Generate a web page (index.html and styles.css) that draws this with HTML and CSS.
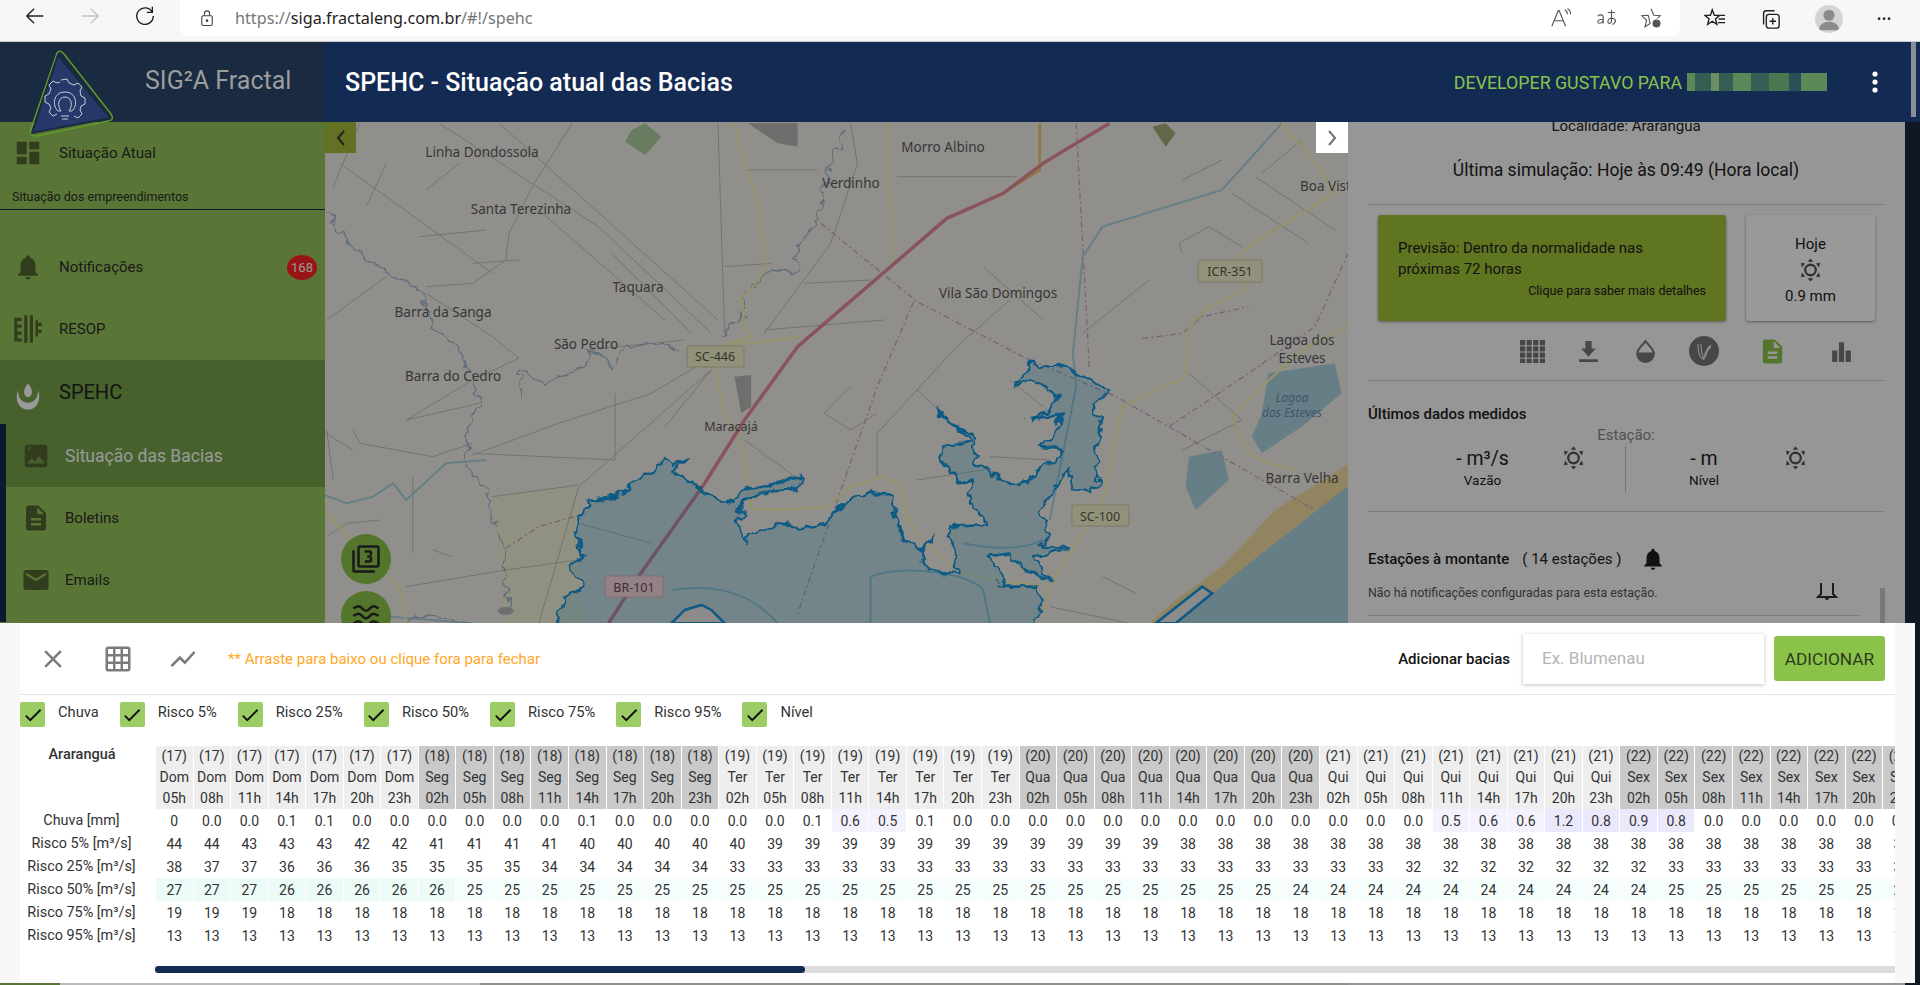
FILE: index.html
```html
<!DOCTYPE html>
<html lang="pt-BR">
<head>
<meta charset="UTF-8">
<title>SIG²A Fractal - SPEHC</title>
<link rel="stylesheet" href="styles.css">
</head>
<body>
    <svg class="defs" width="0" height="0">
        <symbol id="sun" viewBox="0 0 24 24">
            <circle cx="12" cy="12" r="5.500" fill="none" stroke="currentColor" stroke-width="2.400"/>
            <path fill="currentColor" d="M12 0l3 3.400H9zM12 24l-3-3.400h6zM2 4.500l4.400.6-3.300 4.200zM22 4.500l-1.100 4.800-3.300-4.200zM2 19.500l1.100-4.800 3.300 4.200zM22 19.500l-4.400-.6 3.300-4.200z"/>
        </symbol>
    </svg>

    <div class="browser-bar">
        <div class="nav-icons">
            <svg class="nav-icon" viewBox="0 0 24 24"><path d="M21 12H3M11 4l-8 8 8 8"/></svg>
            <svg class="nav-icon nav-off" viewBox="0 0 24 24"><path d="M3 12h18M13 4l8 8-8 8"/></svg>
            <svg class="nav-icon" viewBox="0 0 24 24"><path d="M20 8a9 9 0 1 0 1 4M20 2v6h-6"/></svg>
        </div>
        <div class="url-pill">
            <svg class="lock" viewBox="0 0 24 24"><rect x="5" y="9" width="14" height="13" rx="2"/><path d="M8.500 9V6a3.500 3.500 0 0 1 7 0v3"/><circle cx="12" cy="15.500" r="1"/></svg>
            <div class="url"><span class="url-dim">https://</span>siga.fractaleng.com.br<span class="url-dim">/#!/spehc</span></div>
            <div class="url-tools">
                <svg class="nav-icon thin" viewBox="0 0 24 24"><path d="M2 21L9 4h1l7 17M5 15h10M16 3c2 1 3 3 3 5M19 2c2 1 3.500 3.500 3.500 6"/></svg>
                <svg class="nav-icon thin" viewBox="0 0 24 24"><path d="M3 10c1-2 6-2 6 1v7M9 14c-3-1-6 0-6 2s4 3 6-1M14 6h8M18 3v12c0 3-4 4-4 1s4-5 7-3 0 6-2 6"/></svg>
                <svg class="nav-icon thin" viewBox="0 0 24 24"><path d="M12 2l3 7 7 .6-5.300 4.700 1 3.700M11 18l-5.500 3.500 1.700-7L2 9.600 9 9z"/><circle class="dot-fill" cx="18" cy="18" r="5"/></svg>
            </div>
        </div>
        <div class="browser-tools">
            <svg class="nav-icon" viewBox="0 0 24 24"><path d="M9 2l2.300 6H17l-4.500 4 1.500 6-5-3.500L4 18l1.500-6L1 8h6zM17 8h6M16 12h7M15 16h8"/></svg>
            <svg class="nav-icon" viewBox="0 0 24 24"><rect x="8" y="7" width="14" height="15" rx="3"/><path d="M15 11v7M11.500 14.500h7M5 18V6a3 3 0 0 1 3-3h9"/></svg>
            <div class="avatar"><svg viewBox="0 0 30 30"><circle cx="15" cy="11" r="6"/><path d="M4 27c1-7 6-9 11-9s10 2 11 9z"/></svg></div>
            <div class="browser-dots">•••</div>
        </div>
    </div>

    <div class="app">
        <div class="topbar">
            <div class="brand">SIG²A Fractal</div>
            <div class="title-bar">
                <div class="page-title">SPEHC - Situação atual das Bacias</div>
                <div class="user-name">DEVELOPER GUSTAVO PARA</div>
                <div class="blurred"></div>
                <svg class="more" viewBox="0 0 6 22"><circle cx="3" cy="3" r="2.600"/><circle cx="3" cy="11" r="2.600"/><circle cx="3" cy="19" r="2.600"/></svg>
            </div>
            <svg class="logo" viewBox="0 0 90 90">
                <path class="logo-outer" d="M32 4 Q35 0 39 5 L86 65 Q90 71 83 72 L12 87 Q4 88 6 80 Z"/>
                <path class="logo-inner" d="M33 6 L85 69 L7 84 Z"/>
                <path class="logo-gear" d="M36 31l6-1 2 4 5 2 4-2 4 4-2 4 1 5 4 2v6l-4 2-1 4 2 4-4 4-4-2M32 65l-4 2-4-4 2-4-2-4-4-2v-6l4-2 2-5-2-4 4-4 4 2 3-1"/>
                <path class="logo-gear" d="M33 62c-6-5-5-19 7-19s13 14 7 19l-3 0c4-5 3-14-4-14s-8 9-4 14zM36 67h8M37 70h6"/>
            </svg>
        </div>

        <div class="content">
            <div class="sidebar">
                <div class="side-head">
                    <div class="side-row">
                        <svg class="side-icon" viewBox="0 0 24 24"><path d="M3 13h8V3H3v10zm0 8h8v-6H3v6zm10 0h8V11h-8v10zm0-18v6h8V3h-8z"/></svg>
                        <span>Situação Atual</span>
                    </div>
                    <div class="side-note">Situação dos empreendimentos</div>
                </div>
                <div class="side-item">
                    <svg class="side-icon" viewBox="0 0 24 24"><path d="M12 22c1.100 0 2-.9 2-2h-4c0 1.100.89 2 2 2zm6-6v-5c0-3.070-1.640-5.640-4.500-6.320V4c0-.83-.67-1.500-1.500-1.500s-1.500.67-1.500 1.500v.68C7.630 5.360 6 7.920 6 11v5l-2 2v1h16v-1l-2-2z"/></svg>
                    <span>Notificações</span>
                    <span class="badge">168</span>
                </div>
                <div class="side-item">
                    <svg class="side-icon" viewBox="0 0 24 24"><path d="M1 3h6v2.500H3.500v3H7V11H3.500v3H7v2.500H3.500v3H7V22H1zM9 1h2.500v22H9zM13.500 1H16v22h-2.500zM18 5h2v2h3v2.500h-3v3h3V15h-3v3h-2z"/></svg>
                    <span>RESOP</span>
                </div>
                <div class="side-item side-open">
                    <svg class="side-icon side-drop" viewBox="0 0 24 24"><path d="M12 1c3 4 4 7 2.500 9.500-1.500 2-3.500 2-5 0C8 8 9 5 12 1zM4 6.500c-3 8 1 15.500 8 15.500s11-7.500 8-15.500c0 6-3 10-8 10s-8-4-8-10z"/></svg>
                    <span>SPEHC</span>
                </div>
                <div class="sub-menu">
                    <div class="sub-item sub-active">
                        <svg class="side-icon" viewBox="0 0 24 24"><path d="M21 19V5c0-1.100-.9-2-2-2H5c-1.100 0-2 .9-2 2v14c0 1.100.9 2 2 2h14c1.100 0 2-.9 2-2zM8.500 13.500l2.500 3.010L14.500 12l4.500 6H5l3.500-4.500zM6 5h2l-2 3z"/></svg>
                        <span>Situação das Bacias</span>
                    </div>
                    <div class="sub-item">
                        <svg class="side-icon" viewBox="0 0 24 24"><path d="M14 2H6c-1.100 0-1.990.9-1.990 2L4 20c0 1.100.89 2 1.990 2H18c1.100 0 2-.9 2-2V8l-6-6zm2 16H8v-2h8v2zm0-4H8v-2h8v2zm-3-5V3.500L18.500 9H13z"/></svg>
                        <span>Boletins</span>
                    </div>
                    <div class="sub-item">
                        <svg class="side-icon" viewBox="0 0 24 24"><path d="M20 4H4c-1.100 0-1.990.9-1.990 2L2 18c0 1.100.9 2 2 2h16c1.100 0 2-.9 2-2V6c0-1.100-.9-2-2-2zm0 4l-8 5-8-5V6l8 5 8-5v2z"/></svg>
                        <span>Emails</span>
                    </div>
                </div>
            </div>

            <div class="map">
                <svg class="map-svg" viewBox="0 0 1023 501">
                    <defs>
                        <filter id="jag" x="-5%" y="-5%" width="110%" height="110%">
                            <feTurbulence type="fractalNoise" baseFrequency=".06 .03" numOctaves="2" seed="4"/>
                            <feDisplacementMap in="SourceGraphic" scale="26" xChannelSelector="R" yChannelSelector="G"/>
                        </filter>
                    </defs>
                    <g transform="translate(-5 -2) scale(.6633 .3333)">
                        <path class="m-forest" d="M470 30L490 10 515 50 490 105 460 65z"/>
                        <path class="m-grey" d="M645 10H720V80L690 70z M625 770L650 765 650 860 635 880z"/>
                        <path class="m-olive" d="M1255 20L1275 10 1290 40 1275 80z"/>
                        <path class="m-meadow" d="M260 1130L390 1095 395 1510H280z"/>
                        <path class="m-water" d="M1568 1050L1420 1300 1250 1510H1568z M1430 760L1530 730 1540 820 1480 920 1420 1000 1405 950 1420 880z M1310 1010L1360 990 1370 1080 1320 1170 1305 1100z"/>
                        <path class="m-sand" d="M1568 1010L1440 1170 1360 1340 1290 1440 1250 1510 1290 1510 1420 1300 1568 1070z"/>
                        <path class="m-minor" d="M180 10L420 320 590 640M270 10L600 600M380 10L320 200 285 340 280 420 230 490 160 500M30 130L260 460M100 130L70 260M210 130L160 210M100 470L10 600M160 520L260 650 300 715M300 715L230 780 130 900M240 850L130 900M50 930L60 970 170 1010 230 970M400 690L550 660M600 700L500 820 360 910 230 1005M0 930L50 990M590 750L390 1100 330 1510M260 1130L390 1095 M670 640L770 370 810 130 800 10M640 150H750M870 170H1050M730 490L830 480M670 630L850 600M960 680L840 940 840 1070M1040 540L960 680M1300 400L1295 370 1340 320 1390 380M1310 760L1390 900 1300 990M610 440L680 430M600 10L610 640M520 920L590 750M800 800L760 880 800 930 840 880M130 1400L280 1350 390 1320M1090 600L1000 440M1410 170L1530 330M1375 220L1490 370M1220 1510L1100 1460M20 1080L10 930M140 1070V1300M445 820V1020 L230 1000M60 10L20 200M440 400L560 640M330 270L520 600M150 350L250 330M230 430L300 420M730 1090L640 960M900 810L950 900M1040 780L1090 860M1010 1010L1100 1020M900 1080L1000 1050M1300 180L1360 120M1480 60L1420 160M1180 1370L1230 1420M1150 640L1250 480M10 1250L40 1210 90 1200M170 1290L200 1310M500 1270L390 1210"/>
                        <path class="m-boundary" d="M755 310L900 545 1060 710 1200 830 1500 1170M895 545L840 800 720 1480M1140 10L1160 750M1280 920L1400 760 1500 620 1550 400M280 1285L330 1220 400 1180M1240 655L1300 640 1330 590 1400 560"/>
                        <path class="m-river" d="M1450 10L1360 210 1180 320 1150 410 1135 700 1140 800 1120 1000 1100 1200M0 1120L40 1150 80 1130 110 1090 130 1140 190 1030 250 1020M230 1510L40 1480 M530 1410C600 1390 650 1420 690 1510M830 1510V1370C880 1330 980 1360 1000 1410L1010 1510M970 1270C1020 1290 1060 1290 1090 1260"/>
                        <path class="m-stream" filter="url(#jag)" d="M10 280C40 330 30 370 60 400 90 440 110 470 130 490 160 500 150 530 170 600 170 670 210 640 215 720 240 830 250 850 225 900 220 1000 210 1050 250 1100 270 1200 280 1400 285 1470M305 830L300 750 340 790 400 740 410 690 440 740 460 680 520 670 540 700M600 650L640 590 640 520 680 450 720 460 720 380 750 300 760 220 770 130 790 30M230 1510C180 1500 160 1460 130 1510"/>
                        <path class="m-major" d="M625 10L640 130 660 250 672 440 650 510 635 530 640 620 650 650 610 672M855 10L860 250 865 430M610 672L650 670 725 650M595 740L610 880 640 990 645 1110 650 1165 700 1170 765 1160 800 1100 845 1070 875 1090 885 1190 905 1250 960 1355 1030 1385 1090 1395M1450 10L1510 150 1530 220 1470 290 1400 380 1380 420 1395 510 1340 560 1310 620 1305 770 1210 860 1195 1000 1180 1150 1130 1300 1100 1400 1090 1480M1550 620L1480 690 1420 800 1375 890 1400 1000 1430 1030 1470 1050M0 1160L60 1290 120 1400 130 1510"/>
                        <path class="m-orange" d="M1085 10V150L1030 220"/>
                        <path class="m-highway" d="M1190 10L1090 130 1030 220 945 295 720 680 640 900 580 1090 480 1370 435 1510"/>
                        <path class="m-basin" filter="url(#jag)" d="M350 1640L365 1440 395 1400 375 1340 395 1300 385 1230 405 1140 450 1130 470 1090 510 1050 520 1010 530 1035 555 1015 530 1055 570 1100 600 1140 625 1145 635 1110 670 1100 700 1085 725 1065 720 1105 680 1115 640 1140 630 1170 640 1180 630 1200 640 1265 665 1230 700 1210 725 1225 760 1215 790 1150 830 1115 860 1130 870 1190 880 1260 905 1290 925 1245 905 1300 915 1350 960 1360 950 1220 1010 1215 980 1150 985 1080 970 1090 935 1020 945 980 985 960 935 890 930 865 945 905 990 950 985 1030 1010 1050 1025 1080 1060 1095 1080 1060 1125 990 1085 980 1100 960 1120 880 1070 900 1100 870 1115 830 1075 780 1045 800 1065 750 1070 720 1085 750 1115 735 1190 815 1165 860 1180 910 1170 1000 1175 1060 1165 1120 1135 1110 1130 1040 1090 1160 1095 1260 1085 1280 1125 1285 1080 1310 1100 1380 1060 1350 1040 1300 1010 1310 1030 1380 1030 1400 1080 1400 1090 1440 1040 1640z"/>
                        <path class="m-cut" d="M530 1510L550 1470 575 1455 590 1470 610 1510zM1260 1510L1330 1400 1345 1420 1290 1510z"/>
                        <circle class="m-pin" cx="280" cy="1473" r="12"/>
                    </g>
                    <text class="m-label" x="157" y="35">Linha Dondossola</text>
                    <text class="m-label" x="618" y="30">Morro Albino</text>
                    <text class="m-label" x="526" y="66">Verdinho</text>
                    <text class="m-label" x="196" y="92">Santa Terezinha</text>
                    <text class="m-label m-start" x="975" y="69">Boa Vista</text>
                    <text class="m-label" x="313" y="170">Taquara</text>
                    <text class="m-label" x="118" y="195">Barra da Sanga</text>
                    <text class="m-label" x="673" y="176">Vila São Domingos</text>
                    <text class="m-label" x="261" y="227">São Pedro</text>
                    <text class="m-label" x="128" y="259">Barra do Cedro</text>
                    <text class="m-label m-small" x="406" y="309">Maracajá</text>
                    <text class="m-label" x="977" y="223">Lagoa dos</text>
                    <text class="m-label" x="977" y="241">Esteves</text>
                    <text class="m-label m-lake" x="967" y="280">Lagoa</text>
                    <text class="m-label m-lake" x="967" y="295">dos Esteves</text>
                    <text class="m-label" x="977" y="361">Barra Velha</text>
                    <g class="m-shield"><rect x="362" y="224" width="57" height="21" rx="2"/><text x="390" y="239">SC-446</text></g>
                    <g class="m-shield"><rect x="873" y="138" width="64" height="22" rx="2"/><text x="905" y="154">ICR-351</text></g>
                    <g class="m-shield"><rect x="747" y="383" width="57" height="21" rx="2"/><text x="775" y="399">SC-100</text></g>
                    <g class="m-shield m-red"><rect x="280" y="454" width="58" height="21" rx="2"/><text x="309" y="470">BR-101</text></g>
                </svg>
                <div class="map-toggle">
                    <svg viewBox="0 0 12 20"><path d="M9 3L3 10l6 7"/></svg>
                </div>
                <div class="map-fab">
                    <svg viewBox="0 0 24 24"><path d="M3 5H1v16c0 1.100.9 2 2 2h16v-2H3V5zm18-4H7c-1.100 0-2 .9-2 2v14c0 1.100.9 2 2 2h14c1.100 0 2-.9 2-2V3c0-1.100-.9-2-2-2zm0 16H7V3h14v14zm-4-4v-2c0-.83-.67-1.500-1.500-1.500.83 0 1.500-.67 1.500-1.500V7c0-1.110-.9-2-2-2h-4v2h4v2h-2v2h2v2h-4v2h4c1.100 0 2-.89 2-2z"/></svg>
                </div>
                <div class="map-fab map-fab-low">
                    <svg viewBox="0 0 24 24"><path class="wave" d="M2 6c3-2.500 5-2.500 7 0s4 2.500 6 0 4-2.500 7 0M2 12c3-2.500 5-2.500 7 0s4 2.500 6 0 4-2.500 7 0M2 18c3-2.500 5-2.500 7 0s4 2.500 6 0 4-2.500 7 0"/></svg>
                </div>
            </div>

            <div class="info-panel">
                <div class="locality">Localidade: Araranguá</div>
                <div class="last-run">Última simulação: Hoje às 09:49 (Hora local)</div>
                <div class="cards">
                    <div class="forecast-card">
                        <p>Previsão: Dentro da normalidade nas próximas 72 horas</p>
                        <div class="card-hint">Clique para saber mais detalhes</div>
                    </div>
                    <div class="today-card">
                        <div>Hoje</div>
                        <svg class="sun-icon"><use href="#sun"/></svg>
                        <div>0.9 mm</div>
                    </div>
                </div>
                <div class="tool-row">
                    <svg class="tool t1" viewBox="0 0 24 24"><path d="M0 1h5v5H0zM6.300 1h5v5h-5zM12.600 1h5v5h-5zM19 1h5v5h-5zM0 7h5v5H0zM6.300 7h5v5h-5zM12.600 7h5v5h-5zM19 7h5v5h-5zM0 13h5v5H0zM6.300 13h5v5h-5zM12.600 13h5v5h-5zM19 13h5v5h-5zM0 19h5v4H0zM6.300 19h5v4h-5zM12.600 19h5v4h-5zM19 19h5v4h-5z"/></svg>
                    <svg class="tool t2" viewBox="0 0 24 24"><path d="M19 9h-4V2H9v7H5l7 8 7-8zM3 19.500v2.500h18v-2.500z"/></svg>
                    <svg class="tool t3" viewBox="0 0 24 24"><path class="drop-line" d="M12 2c3 4 8 8 8 12a8 8 0 0 1-16 0c0-4 5-8 8-12z"/><path d="M4 13h16c1 5-3 9-8 9s-9-4-8-9z"/></svg>
                    <div class="tool t4"><svg viewBox="0 0 24 24"><path class="logo-lines" d="M6 5c0 8 2 14 5 15 3-4 4-10 8-14M9 5c0 7 1 11 3 15 2-3 3-10 7-12M12 20c1-6 3-12 7-14"/></svg></div>
                    <svg class="tool t5" viewBox="0 0 24 24"><path d="M14 2H6c-1.100 0-1.990.9-1.990 2L4 20c0 1.100.89 2 1.990 2H18c1.100 0 2-.9 2-2V8l-6-6zm2 16H8v-2h8v2zm0-4H8v-2h8v2zm-3-5V3.500L18.500 9H13z"/></svg>
                    <svg class="tool t6" viewBox="0 0 24 24"><path d="M3 11h5v11H3zM9.500 3h5v19h-5zM16 11h5v11h-5z"/></svg>
                </div>
                <div class="measured">
                    <h4>Últimos dados medidos</h4>
                    <div class="station">Estação:</div>
                    <div class="gauges">
                        <div class="gauge">
                            <div class="gauge-val">- m³/s<small>Vazão</small></div>
                            <svg class="sun-icon gauge-sun"><use href="#sun"/></svg>
                        </div>
                        <div class="gauge gauge-right">
                            <div class="gauge-val">- m<small>Nível</small></div>
                            <svg class="sun-icon gauge-sun"><use href="#sun"/></svg>
                        </div>
                    </div>
                </div>
                <div class="upstream">
                    <div class="upstream-head">
                        <h4>Estações à montante</h4>
                        <span>( 14 estações )</span>
                        <svg viewBox="0 0 24 24"><path d="M12 22c1.100 0 2-.9 2-2h-4c0 1.100.89 2 2 2zm6-6v-5c0-3.070-1.640-5.640-4.500-6.320V4c0-.83-.67-1.500-1.500-1.500s-1.500.67-1.500 1.500v.68C7.630 5.360 6 7.920 6 11v5l-2 2v1h16v-1l-2-2z"/></svg>
                    </div>
                    <div class="upstream-note">
                        <span>Não há notificações configuradas para esta estação.</span>
                        <svg viewBox="0 0 24 18"><path class="bell-base" d="M6 0v11l-3 3h18l-3-3V0"/><path d="M10 15h4c0 1.100-.9 2-2 2s-2-.9-2-2z"/></svg>
                    </div>
                </div>
                <div class="panel-scroll"></div>
            </div>
            <div class="page-edge"></div>
        </div>

        <div class="backdrop"></div>
        <div class="page-scroll"></div>
        <div class="map-toggle map-toggle-right">
            <svg viewBox="0 0 12 20"><path d="M3 3l6 7-6 7"/></svg>
        </div>

        <div class="bottom-sheet">
            <div class="sheet-body">
                <div class="sheet-tools">
                    <svg class="sheet-icon" viewBox="0 0 24 24"><path d="M19 6.410L17.590 5 12 10.590 6.410 5 5 6.410 10.590 12 5 17.590 6.410 19 12 13.410 17.590 19 19 17.590 13.410 12z"/></svg>
                    <svg class="sheet-icon" viewBox="0 0 24 24"><path d="M20 2H4c-1.100 0-2 .9-2 2v16c0 1.100.9 2 2 2h16c1.100 0 2-.9 2-2V4c0-1.100-.9-2-2-2zM8 20H4v-4h4v4zm0-6H4v-4h4v4zm0-6H4V4h4v4zm6 12h-4v-4h4v4zm0-6h-4v-4h4v4zm0-6h-4V4h4v4zm6 12h-4v-4h4v4zm0-6h-4v-4h4v4zm0-6h-4V4h4v4z"/></svg>
                    <svg class="sheet-icon" viewBox="0 0 24 24"><path d="M3.500 18.490l6-6.010 4 4L22 6.920l-1.410-1.410-7.090 7.970-4-4L2 16.990z"/></svg>
                    <span class="drag-hint">** Arraste para baixo ou clique fora para fechar</span>
                    <span class="add-label">Adicionar bacias</span>
                    <div class="add-input">Ex. Blumenau</div>
                    <button type="button" class="add-button">ADICIONAR</button>
                </div>
                <div class="legend" id="legend"></div>
                <div class="table-wrap">
                    <table class="data-table" id="dataTable"></table>
                </div>
                <div class="table-scroll"><div class="table-thumb"></div></div>
            </div>
        </div>
        <div class="taskbar-light"></div>
    </div>

    <script>
        const legendNames = ['Chuva', 'Risco 5%', 'Risco 25%', 'Risco 50%', 'Risco 75%', 'Risco 95%', 'Nível'];
        const days = [['17', 'Dom', 7], ['18', 'Seg', 8], ['19', 'Ter', 8], ['20', 'Qua', 8], ['21', 'Qui', 8], ['22', 'Sex', 8], ['23', 'Sab', 1]];

        function repeat(value, times) {
            return Array(times).fill(value);
        }

        const rows = [
            ['Chuva [mm]', ['0', '0.0', '0.0', '0.1', '0.1', '0.0', '0.0', '0.0', '0.0', '0.0', '0.0', '0.1', '0.0', '0.0', '0.0',
                '0.0', '0.0', '0.1', '0.6', '0.5', '0.1', '0.0', '0.0', ...repeat('0.0', 8),
                '0.0', '0.0', '0.0', '0.5', '0.6', '0.6', '1.2', '0.8', '0.9', '0.8', '0.0', '0.0', '0.0', '0.0', '0.0', '0.0']],
            ['Risco 5% [m³/s]', [44, 44, 43, 43, 43, 42, 42, 41, 41, 41, 41, 40, 40, 40, 40, 40, ...repeat(39, 11), ...repeat(38, 20)]],
            ['Risco 25% [m³/s]', [38, 37, 37, 36, 36, 36, 35, 35, 35, 35, 34, 34, 34, 34, 34, ...repeat(33, 18), ...repeat(32, 7), ...repeat(33, 7)]],
            ['Risco 50% [m³/s]', [27, 27, 27, 26, 26, 26, 26, 26, ...repeat(25, 22), ...repeat(24, 10), ...repeat(25, 7)]],
            ['Risco 75% [m³/s]', [19, 19, 19, ...repeat(18, 44)]],
            ['Risco 95% [m³/s]', repeat(13, 47)]
        ];

        const hours = ['02h', '05h', '08h', '11h', '14h', '17h', '20h', '23h'];

        let legendHtml = '';
        legendNames.forEach(function (name) {
            legendHtml += '<label class="legend-item"><span class="check"><svg viewBox="0 0 24 24"><path d="M9 16.170L4.830 12l-1.420 1.410L9 19 21 7l-1.410-1.410z"/></svg></span>' + name + '</label>';
        });
        document.getElementById('legend').innerHTML = legendHtml;

        let tableHtml = '<thead><tr><th class="place">Araranguá</th>';
        days.forEach(function (day, index) {
            const start = index === 0 ? 1 : 0;
            for (let i = 0; i < day[2]; i++) {
                const shade = index % 2 === 1 ? 'day-dark' : 'day-light';
                tableHtml += '<th class="' + shade + '">(' + day[0] + ')<br>' + day[1] + '<br>' + hours[i + start] + '</th>';
            }
        });
        tableHtml += '</tr></thead><tbody>';

        rows.forEach(function (row, rowIndex) {
            tableHtml += '<tr><td class="row-name">' + row[0] + '</td>';
            row[1].forEach(function (value) {
                let cls = '';
                if (rowIndex === 0 && value >= 0.8) cls = 'rain-high';
                else if (rowIndex === 0 && value >= 0.5) cls = 'rain-low';
                if (rowIndex === 3) cls = value >= 26 ? 'risk-high' : 'risk-low';
                tableHtml += '<td class="' + cls + '">' + value + '</td>';
            });
            tableHtml += '</tr>';
        });
        document.getElementById('dataTable').innerHTML = tableHtml + '</tbody>';
    </script>
</body>
</html>
```

FILE: styles.css
```css
* {
    box-sizing: border-box;
}
html, body {
    margin: 0;
    padding: 0;
    height: 985px;
    overflow: hidden;
}
body {
    display: flex;
    flex-direction: column;
    font-family: Roboto, "Liberation Sans", sans-serif;
    font-size: 14px;
    color: #212121;
    background: #1a2a40;
}
.defs {
    position: absolute;
}

/* browser chrome */
.browser-bar {
    display: flex;
    height: 42px;
    flex: none;
    background: #f7f7f7;
    border-bottom: 1px solid #c9c9c9;
}
.nav-icons {
    display: flex;
    width: 180px;
    flex: none;
    padding: 4px 0 0 24px;
    gap: 33px;
}
.nav-icon {
    width: 22px;
    height: 24px;
    fill: none;
    stroke: #1f1f1f;
    stroke-width: 1.500;
}
.nav-off {
    stroke: #c4c4c4;
}
.thin {
    stroke: #555;
    stroke-width: 1.200;
}
.dot-fill {
    fill: #555;
    stroke: #fff;
}
.url-pill {
    display: flex;
    align-items: center;
    width: 1500px;
    height: 36px;
    flex: none;
    padding: 0 18px 0 18px;
    background: #fff;
    border-radius: 0 0 8px 8px;
}
.lock {
    width: 18px;
    height: 20px;
    fill: none;
    stroke: #444;
    stroke-width: 1.500;
}
.url {
    margin-left: 19px;
    font-family: "Noto Sans", sans-serif;
    font-size: 16.200px;
    color: #1d1d1d;
}
.url-dim {
    color: #767676;
}
.url-tools {
    display: flex;
    gap: 23px;
    margin-left: auto;
}
.browser-tools {
    display: flex;
    align-items: center;
    flex: 1;
    padding: 0 0 4px 24px;
    gap: 33px;
}
.avatar {
    width: 28px;
    height: 28px;
    margin-left: 1px;
    overflow: hidden;
    background: #d4d4d4;
    border-radius: 50%;
}
.avatar svg {
    display: block;
    fill: #8b8b8b;
}
.browser-dots {
    margin-left: 1px;
    font-size: 12px;
    letter-spacing: 1px;
    color: #222;
}

/* app frame */
.app {
    position: relative;
    display: flex;
    flex-direction: column;
    flex: 1;
    overflow: hidden;
}
.topbar {
    position: relative;
    z-index: 10;
    display: flex;
    height: 80px;
    flex: none;
}
.brand {
    width: 325px;
    padding: 24px 0 0 145px;
    font-size: 25px;
    color: #9d9d9d;
    background: #1a2a40;
}
.title-bar {
    display: flex;
    align-items: center;
    flex: 1;
    padding-left: 20px;
    background: #132a52;
}
.page-title {
    font-size: 25px;
    font-weight: 500;
    color: #fff;
}
.user-name {
    margin-left: auto;
    font-size: 17.800px;
    color: #8bc34a;
}
.blurred {
    width: 140px;
    height: 18px;
    margin: 0 45px 0 5px;
    background: linear-gradient(90deg, #6f9f5a 0 8px, #3d6a55 8px 24px, #7fa868 24px 32px, #3d6a55 32px 46px, #6f9f5a 46px 64px, #3f6b58 64px 82px, #5a8a50 82px 102px, #2f5a58 102px 114px, #6f9f5a 114px 140px);
    opacity: .8;
}
.more {
    width: 6px;
    height: 22px;
    margin-right: 42px;
    fill: #fff;
}
.logo {
    position: absolute;
    left: 25px;
    top: 7px;
    width: 90px;
    height: 90px;
}
.logo-outer {
    fill: none;
    stroke: #5f9a2a;
    stroke-width: 1.500;
}
.logo-inner {
    fill: #27396a;
    stroke: #1a2a40;
    stroke-width: 2;
    stroke-linejoin: round;
}
.logo-gear {
    fill: none;
    stroke: #c9ccd2;
    stroke-width: 1;
}
.content {
    display: flex;
    flex: 1;
    min-height: 0;
}

/* sidebar */
.sidebar {
    width: 325px;
    flex: none;
    font-size: 15px;
    background: #96c55a;
    color: #2c2c2c;
}
.side-head {
    height: 88px;
    margin-bottom: 26px;
    border-bottom: 1px solid #132a52;
}
.side-row {
    display: flex;
    align-items: center;
    height: 62px;
    padding-left: 13px;
}
.side-row span, .side-item span {
    margin-left: 16px;
}
.side-icon {
    width: 30px;
    height: 30px;
    flex: none;
    fill: #52662f;
}
.side-note {
    padding: 5px 0 0 12px;
    font-size: 12.500px;
}
.side-item {
    display: flex;
    align-items: center;
    height: 62px;
    padding-left: 13px;
}
.badge {
    display: flex;
    align-items: center;
    justify-content: center;
    width: 30px;
    height: 25px;
    margin: 0 8px 0 auto !important;
    font-size: 13px;
    color: #fff;
    background: #ff2222;
    border-radius: 50%;
}
.side-open {
    height: 64px;
    font-size: 20px;
    color: #222;
    background: #75a24a;
}
.side-drop {
    margin-top: 10px;
    fill: #fff;
}
.sub-menu {
    height: 198px;
    border-left: 6px solid #132a52;
}
.sub-item {
    display: flex;
    align-items: center;
    height: 62px;
    padding-left: 15px;
}
.sub-item span {
    margin-left: 14px;
}
.sub-active {
    height: 63px;
    font-size: 17.500px;
    color: #fff;
    background: #75a24a;
}

/* map */
.map {
    position: relative;
    width: 1023px;
    flex: none;
    overflow: hidden;
    background: #f2efe9;
}
.map-svg {
    display: block;
    width: 1023px;
    height: 501px;
}
.map-svg path {
    vector-effect: non-scaling-stroke;
}
.m-forest {
    fill: #add19e;
}
.m-grey {
    fill: #b9b7b4;
}
.m-olive {
    fill: #a7ab7c;
}
.m-meadow {
    fill: #f0f2d6;
}
.m-water {
    fill: #aad3df;
}
.m-sand {
    fill: #f2dca0;
}
.m-minor {
    fill: none;
    stroke: #c4c1bb;
    stroke-width: 1;
}
.m-boundary {
    fill: none;
    stroke: #c8a6c8;
    stroke-width: 1.300;
    stroke-dasharray: 6 3 2 3;
}
.m-river {
    fill: none;
    stroke: #aad3df;
    stroke-width: 2;
}
.m-stream {
    fill: none;
    stroke: #9db6cc;
    stroke-width: 1.400;
}
.m-major {
    fill: none;
    stroke: #f4f6b8;
    stroke-width: 2.500;
}
.m-orange {
    fill: none;
    stroke: #f2c26e;
    stroke-width: 2.500;
}
.m-highway {
    fill: none;
    stroke: #e58a96;
    stroke-width: 3.500;
}
.m-basin {
    fill: rgba(25, 152, 222, .2);
    stroke: #1998de;
    stroke-width: 2.600;
    stroke-linejoin: round;
}
.m-cut {
    fill: #e8eae6;
    stroke: #1998de;
    stroke-width: 2.600;
}
.m-pin {
    fill: #b9b9b9;
}
.m-label {
    font-family: "Noto Sans", sans-serif;
    font-size: 13.500px;
    text-anchor: middle;
    fill: #5c5c5c;
}
.m-small {
    font-size: 12.500px;
}
.m-start {
    text-anchor: start;
}
.m-lake {
    font-size: 12px;
    font-style: italic;
    fill: #6b8fb0;
}
.m-shield rect {
    fill: #f3f4cf;
    stroke: #c9caa0;
}
.m-shield text {
    font-family: "Noto Sans", sans-serif;
    font-size: 12.500px;
    text-anchor: middle;
    fill: #5a5a40;
}
.m-red rect {
    fill: #f4d9df;
    stroke: #d8b2bc;
}
.m-red text {
    fill: #6e4a55;
}
.map-toggle {
    position: absolute;
    left: 0;
    top: 0;
    display: flex;
    align-items: center;
    justify-content: center;
    width: 31px;
    height: 31px;
    background: #a6bf3a;
}
.map-toggle svg {
    width: 12px;
    height: 20px;
    fill: none;
    stroke: #3d3d3d;
    stroke-width: 2.200;
}
.map-toggle-right {
    left: 1316px;
    top: 80px;
    z-index: 6;
    width: 32px;
    background: #fff;
}
.map-toggle-right svg {
    stroke: #777;
}
.map-fab {
    position: absolute;
    left: 16px;
    top: 412px;
    display: flex;
    align-items: center;
    justify-content: center;
    width: 50px;
    height: 50px;
    background: #8bc34a;
    border-radius: 50%;
}
.map-fab svg {
    width: 30px;
    height: 30px;
    fill: #2b2b2b;
}
.map-fab-low {
    top: 469px;
}
.wave {
    fill: none;
    stroke: #2b2b2b;
    stroke-width: 2;
}

/* right panel */
.info-panel {
    position: relative;
    width: 557px;
    flex: none;
    padding: 0 21px 0 20px;
    overflow: hidden;
    background: #fbfbfb;
}
.locality {
    margin-top: -4px;
    margin-bottom: 3px;
    font-size: 15px;
    line-height: 16px;
    text-align: center;
}
.last-run {
    height: 68px;
    padding-top: 22px;
    font-size: 17.500px;
    line-height: 22px;
    text-align: center;
    border-bottom: 1px solid #cfcfcf;
}
.cards {
    display: flex;
    gap: 20px;
    margin: 10px 0 0 10px;
}
.forecast-card {
    position: relative;
    width: 348px;
    height: 106px;
    padding: 23px 20px 0;
    font-size: 15px;
    line-height: 21px;
    background: #9ec336;
    border-radius: 3px;
    box-shadow: 0 1px 3px rgba(0,0,0,.4);
}
.forecast-card p {
    width: 270px;
    margin: 0;
}
.card-hint {
    margin-top: 1px;
    font-size: 12.500px;
    line-height: 20px;
    text-align: right;
}
.today-card {
    display: flex;
    flex-direction: column;
    align-items: center;
    width: 129px;
    height: 106px;
    padding-top: 20px;
    font-size: 15px;
    background: #fff;
    border-radius: 3px;
    box-shadow: 0 1px 3px rgba(0,0,0,.4);
}
.sun-icon {
    width: 23px;
    height: 24px;
    margin: 5px 0 5px;
    color: #555;
}
.tool-row {
    position: relative;
    height: 60px;
    border-bottom: 1px solid #cfcfcf;
}
.tool {
    position: absolute;
    top: 18px;
    width: 25px;
    height: 25px;
    fill: #777;
}
.t1 {
    left: 152px;
}
.t2 {
    left: 208px;
}
.t3 {
    left: 265px;
}
.t4 {
    left: 321px;
    top: 15px;
    width: 30px;
    height: 30px;
    padding: 3px;
    background: #777;
    border-radius: 50%;
}
.t4 svg {
    display: block;
}
.logo-lines {
    fill: none;
    stroke: #e5e5e5;
    stroke-width: 1.200;
}
.t5 {
    left: 390px;
    top: 16px;
    width: 29px;
    height: 29px;
    fill: #8bc34a;
}
.t6 {
    left: 461px;
}
.drop-line {
    fill: none;
    stroke: #777;
    stroke-width: 2;
}
.measured {
    height: 131px;
    padding-top: 24px;
    border-bottom: 1px solid #cfcfcf;
}
h4 {
    margin: 0;
    font-size: 15px;
    line-height: 18px;
    font-weight: 500;
}
.station {
    margin-top: 4px;
    font-size: 15px;
    line-height: 16px;
    text-align: center;
    color: #888;
}
.gauges {
    position: relative;
    display: flex;
    margin-top: 3px;
}
.gauges::after {
    content: "";
    position: absolute;
    left: 257px;
    top: 0;
    width: 1px;
    height: 46px;
    background: #c0c0c0;
}
.gauge {
    position: relative;
    width: 50%;
}
.gauge-val {
    width: 229px;
    font-size: 19.500px;
    line-height: 25px;
    text-align: center;
}
.gauge-right .gauge-val {
    width: 156px;
}
.gauge-val small {
    display: block;
    font-size: 13.500px;
    line-height: 18px;
}
.gauge-sun {
    position: absolute;
    left: 194px;
    top: 0;
    margin: 0;
}
.gauge-right .gauge-sun {
    left: 158px;
}
.upstream {
    padding-top: 37px;
}
.upstream-head {
    display: flex;
    align-items: center;
    height: 20px;
    font-size: 15px;
}
.upstream-head span {
    margin-left: 13px;
}
.upstream-head svg {
    width: 26px;
    height: 28px;
    margin-left: 18px;
    fill: #1d1d1d;
}
.upstream-note {
    position: relative;
    width: 492px;
    height: 31px;
    margin-top: 16px;
    font-size: 12.400px;
    color: #555;
    border-bottom: 1px solid #cfcfcf;
}
.upstream-note svg {
    position: absolute;
    left: 447px;
    top: -2px;
    width: 24px;
    height: 18px;
    fill: #333;
}
.bell-base {
    fill: none;
    stroke: #333;
    stroke-width: 2;
}
.panel-scroll {
    position: absolute;
    left: 532px;
    top: 466px;
    width: 5px;
    height: 40px;
    background: #c9c9c9;
}
.page-edge {
    position: relative;
    flex: 1;
}
.backdrop {
    position: absolute;
    left: 0;
    right: 0;
    top: 80px;
    bottom: 0;
    z-index: 5;
    background: rgba(0, 0, 0, .4);
}
.page-scroll {
    position: absolute;
    right: 4px;
    top: 0;
    z-index: 11;
    width: 5px;
    height: 75px;
    background: #8a8f98;
}

/* bottom sheet */
.bottom-sheet {
    position: absolute;
    left: 0;
    bottom: 2px;
    z-index: 7;
    width: 1915px;
    height: 360px;
    padding: 0 20px;
    background: #f8f8f8;
}
.sheet-body {
    height: 100%;
    background: #fff;
}
.sheet-tools {
    display: flex;
    align-items: center;
    height: 72px;
    padding-right: 10px;
    border-bottom: 1px solid #e3e3e3;
}
.sheet-icon {
    width: 30px;
    height: 30px;
    margin: 1px 0 0 18px;
    fill: #7b7b7b;
}
.sheet-icon + .sheet-icon {
    margin-left: 35px;
}
.drag-hint {
    margin-left: 30px;
    font-size: 15px;
    color: #ffa726;
}
.add-label {
    margin-left: auto;
    font-size: 15px;
    font-weight: 500;
    color: #111;
}
.add-input {
    width: 241px;
    height: 50px;
    margin-left: 13px;
    padding: 14px 19px;
    font-size: 17px;
    color: #b5b5b5;
    background: #fff;
    box-shadow: 0 1px 4px rgba(0,0,0,.25);
}
.add-button {
    width: 111px;
    height: 45px;
    margin-left: 10px;
    padding: 0;
    font-family: Roboto, sans-serif;
    font-size: 17.300px;
    color: #2b3a1a;
    background: #8bc34a;
    border: none;
    border-radius: 3px;
}
.legend {
    display: flex;
    gap: 21px;
    margin-top: 7px;
}
.legend-item {
    display: flex;
    gap: 13px;
    height: 25px;
    font-size: 14.700px;
    line-height: 20px;
    color: #333;
}
.check {
    display: flex;
    align-items: center;
    justify-content: center;
    width: 25px;
    height: 25px;
    background: #9ccc65;
    border-radius: 2px;
}
.check svg {
    width: 22px;
    height: 22px;
    fill: #111;
}
.table-wrap {
    width: 1875px;
    margin-top: 19px;
    overflow: hidden;
}
.data-table {
    width: max-content;
    table-layout: fixed;
    border-collapse: separate;
    border-spacing: 0;
    font-size: 14px;
}
.data-table th, .data-table td {
    width: 37.550px;
    padding: 0;
    text-align: center;
    border-right: 1px solid #fff;
}
.data-table th {
    height: 63px;
    font-weight: 400;
    line-height: 21px;
    color: #333;
}
.data-table td {
    height: 23px;
    line-height: 20px;
    color: #333;
}
.data-table .place {
    width: 136px;
    padding-right: 11px;
    font-size: 14.500px;
    vertical-align: top;
    font-weight: 500;
    line-height: 17px;
}
.data-table .row-name {
    width: 136px;
    padding-right: 12px;
    font-size: 14.400px;
}
.day-light {
    background: #eeeeee;
}
.day-dark {
    background: #c9c9c9;
}
.rain-low {
    background: #f4f3fd;
}
.rain-high {
    background: #e9e9fb;
}
.risk-high {
    background: #edfbf8;
}
.risk-low {
    background: #f6fefd;
}
.table-scroll {
    height: 7px;
    margin: 19px 0 0 135px;
    background: #dcdcdc;
}
.table-thumb {
    width: 650px;
    height: 100%;
    background: #132a52;
    border-radius: 4px;
}
.taskbar-light {
    position: absolute;
    left: 60px;
    bottom: 0;
    z-index: 7;
    width: 420px;
    height: 2px;
    background: #bbb;
}
```
